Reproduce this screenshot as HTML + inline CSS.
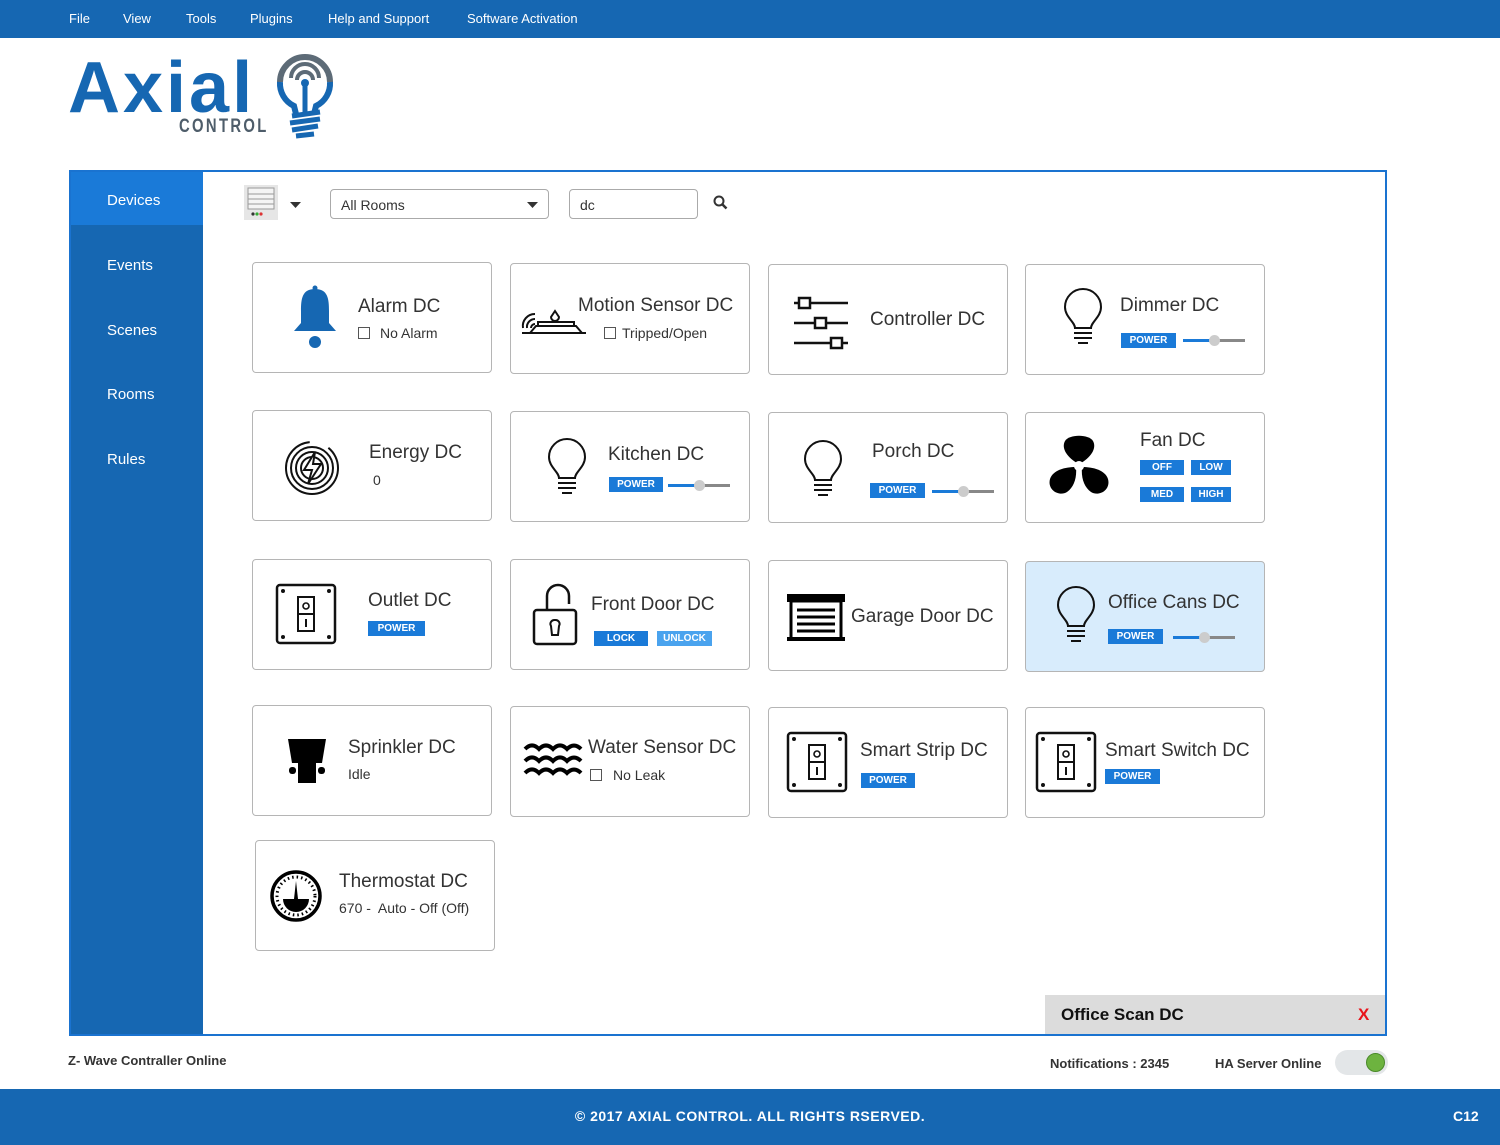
<!DOCTYPE html>
<html><head><meta charset="utf-8"><style>
*{margin:0;padding:0;box-sizing:border-box}
body{width:1500px;height:1145px;position:relative;background:#fff;font-family:"Liberation Sans",sans-serif;color:#333;overflow:hidden}
.a{position:absolute}
.top{left:0;top:0;width:1500px;height:38px;background:#1667b2}
.menu{color:#fff;font-size:13px;top:11px}
.side{left:69px;top:170px;width:134px;height:866px;background:#1667b2}
.panel{left:69px;top:170px;width:1318px;height:866px;border:2px solid #1a73d0}
.nav{color:#fff;font-size:15px;left:107px}
.card{border:1.5px solid #b5b5b5;border-radius:4px;width:240px;height:111px;background:#fff}
.t{font-size:19px;color:#333;line-height:22px;white-space:nowrap}
.s{font-size:14px;color:#333;line-height:18px;white-space:nowrap}
.cb{width:12px;height:12px;border:1px solid #555}
.btn{background:#1a7ad8;color:#fff;font-size:10px;font-weight:bold;text-align:center;line-height:15px;height:15px}
.sl{height:3px;background:#888}
.sl i{position:absolute;left:0;top:0;height:3px;background:#1a7ad8}
.sl b{position:absolute;top:-4px;width:11px;height:11px;border-radius:50%;background:#ccc}
svg{position:absolute}
</style></head><body>
<div class="a top"></div>
<div class="a menu" style="left:69px">File</div>
<div class="a menu" style="left:123px">View</div>
<div class="a menu" style="left:186px">Tools</div>
<div class="a menu" style="left:250px">Plugins</div>
<div class="a menu" style="left:328px">Help and Support</div>
<div class="a menu" style="left:467px">Software Activation</div>

<!-- logo -->
<div class="a" style="left:68px;top:48px;font-size:72px;font-weight:bold;color:#1667b2;letter-spacing:3px;line-height:80px">Axial</div>
<div class="a" style="left:179px;top:116px;font-size:19px;font-weight:bold;color:#4e5d6a;letter-spacing:3px;transform:scaleX(.78);transform-origin:left">CONTROL</div>
<svg style="left:272px;top:50px" width="66" height="92" viewBox="0 0 66 92">
<path d="M8 32 A25 25 0 0 1 58 32" fill="none" stroke="#5d6b77" stroke-width="6"/>
<path d="M8 32 A25 25 0 0 0 22 56 L24 64 M58 32 A25 25 0 0 1 44 56 L42 64" fill="none" stroke="#1667b2" stroke-width="6"/>
<path d="M19 28 A14 14 0 0 1 47 28 M25 30 A8 8 0 0 1 41 30" fill="none" stroke="#5d6b77" stroke-width="4"/>
<circle cx="33" cy="33" r="4" fill="#1667b2"/><path d="M33 33 V62" stroke="#1667b2" stroke-width="5"/>
<path d="M20 66 L48 62 M18 73 L48 69 M20 80 L46 76 M24 86 L42 84" stroke="#1667b2" stroke-width="5"/>
</svg>

<div class="a side"></div>
<div class="a" style="left:69px;top:172px;width:134px;height:53px;background:#1a7ad8"></div>
<div class="a panel"></div>
<div class="a nav" style="top:192px">Devices</div>
<div class="a nav" style="top:257px">Events</div>
<div class="a nav" style="top:322px">Scenes</div>
<div class="a nav" style="top:386px">Rooms</div>
<div class="a nav" style="top:451px">Rules</div>

<!-- toolbar -->
<div class="a" style="left:244px;top:185px;width:34px;height:35px;background:#e6e6e6"></div>
<svg style="left:244px;top:185px" width="34" height="35"><rect x="4" y="3" width="26" height="21" fill="#f4f4f4" stroke="#999"/><path d="M4 9H30M4 14H30M4 19H30" stroke="#999"/><circle cx="9" cy="29" r="1.6" fill="#333"/><circle cx="13" cy="29" r="1.6" fill="#3a3"/><circle cx="17" cy="29" r="1.6" fill="#d33"/></svg>
<svg style="left:290px;top:202px" width="11" height="6"><path d="M0 0H11L5.5 6Z" fill="#333"/></svg>
<div class="a" style="left:330px;top:189px;width:219px;height:30px;border:1px solid #aaa;border-radius:4px;font-size:14px;padding:7px 10px">All Rooms</div>
<svg style="left:527px;top:202px" width="11" height="6"><path d="M0 0H11L5.5 6Z" fill="#333"/></svg>
<div class="a" style="left:569px;top:189px;width:129px;height:30px;border:1px solid #aaa;border-radius:4px;font-size:14px;padding:7px 10px">dc</div>
<svg style="left:713px;top:195px" width="15" height="15"><circle cx="6" cy="6" r="4.5" fill="none" stroke="#333" stroke-width="2"/><path d="M9.5 9.5L13.5 13.5" stroke="#333" stroke-width="2.5"/></svg>

<!-- Row 1 -->
<div class="a card" style="left:252px;top:262px"></div>
<svg style="left:292px;top:285px" width="46" height="64"><circle cx="23" cy="3" r="2.5" fill="#1667b2"/><path d="M23 4 C10 4 9 14 9 26 L9 38 L2 46 H44 L37 38 L37 26 C37 14 36 4 23 4Z" fill="#1667b2"/><circle cx="23" cy="57" r="6" fill="#1667b2"/></svg>
<div class="a t" style="left:358px;top:296px">Alarm DC</div>
<div class="a cb" style="left:358px;top:327px"></div><div class="a s" style="left:380px;top:324px">No Alarm</div>

<div class="a card" style="left:510px;top:263px"></div>
<svg style="left:520px;top:303px" width="68" height="34"><path d="M2 30H66M10 30 L16 23 H56 L62 30 M18 23V19H54V23" fill="none" stroke="#111" stroke-width="2"/><path d="M35 8 L31 14 A4 4 0 0 0 39 14Z" fill="none" stroke="#111" stroke-width="2"/><path d="M3 25 A12 12 0 0 1 15 11 M7 25 A8 8 0 0 1 15 16 M11 25 A4 4 0 0 1 15 21" fill="none" stroke="#111" stroke-width="2"/></svg>
<div class="a t" style="left:578px;top:295px">Motion Sensor DC</div>
<div class="a cb" style="left:604px;top:327px"></div><div class="a s" style="left:622px;top:324px">Tripped/Open</div>

<div class="a card" style="left:768px;top:264px"></div>
<svg style="left:792px;top:296px" width="58" height="54"><g fill="none" stroke="#111" stroke-width="2.5"><path d="M2 7H56M2 27H56M2 47H56"/><rect x="7" y="2" width="11" height="10" fill="#fff"/><rect x="23" y="22" width="11" height="10" fill="#fff"/><rect x="39" y="42" width="11" height="10" fill="#fff"/></g></svg>
<div class="a t" style="left:870px;top:309px">Controller DC</div>

<div class="a card" style="left:1025px;top:264px"></div>
<svg style="left:1062px;top:288px" width="42" height="60"><path d="M13 40 C13 34 3 29 3 19 A18 18 0 0 1 39 19 C39 29 29 34 29 40 Z" fill="none" stroke="#111" stroke-width="2"/><path d="M12 45H30M12 50H30M16 55H26" stroke="#111" stroke-width="2"/></svg>
<div class="a t" style="left:1120px;top:295px">Dimmer DC</div>
<div class="a btn" style="left:1121px;top:333px;width:55px">POWER</div>
<div class="a sl" style="left:1183px;top:339px;width:62px"><i style="width:31px"></i><b style="left:26px"></b></div>

<!-- Row 2 -->
<div class="a card" style="left:252px;top:410px"></div>
<svg style="left:284px;top:440px" width="56" height="56"><g fill="none" stroke="#111" stroke-width="2"><circle cx="28" cy="28" r="26" stroke-dasharray="120 20"/><circle cx="28" cy="28" r="21"/><circle cx="28" cy="28" r="16"/><circle cx="28" cy="28" r="11"/></g><path d="M31 12 L20 30 H28 L24 44 L37 24 H29Z" fill="#fff" stroke="#111" stroke-width="2"/></svg>
<div class="a t" style="left:369px;top:442px">Energy DC</div>
<div class="a s" style="left:373px;top:471px">0</div>

<div class="a card" style="left:510px;top:411px"></div>
<svg style="left:546px;top:438px" width="42" height="60"><path d="M13 40 C13 34 3 29 3 19 A18 18 0 0 1 39 19 C39 29 29 34 29 40 Z" fill="none" stroke="#111" stroke-width="2"/><path d="M12 45H30M12 50H30M16 55H26" stroke="#111" stroke-width="2"/></svg>
<div class="a t" style="left:608px;top:444px">Kitchen DC</div>
<div class="a btn" style="left:609px;top:477px;width:54px">POWER</div>
<div class="a sl" style="left:668px;top:484px;width:62px"><i style="width:31px"></i><b style="left:26px"></b></div>

<div class="a card" style="left:768px;top:412px"></div>
<svg style="left:802px;top:440px" width="42" height="60"><path d="M13 40 C13 34 3 29 3 19 A18 18 0 0 1 39 19 C39 29 29 34 29 40 Z" fill="none" stroke="#111" stroke-width="2"/><path d="M12 45H30M12 50H30M16 55H26" stroke="#111" stroke-width="2"/></svg>
<div class="a t" style="left:872px;top:441px">Porch DC</div>
<div class="a btn" style="left:870px;top:483px;width:55px">POWER</div>
<div class="a sl" style="left:932px;top:490px;width:62px"><i style="width:31px"></i><b style="left:26px"></b></div>

<div class="a card" style="left:1025px;top:412px"></div>
<svg style="left:1047px;top:434px" width="64" height="62"><g fill="#000"><path d="M32 30 C20 24 14 14 18 7 C22 0 42 0 46 7 C50 14 44 24 32 30Z"/><path d="M29 33 C18 33 6 36 3 45 C0 56 12 63 20 58 C27 53 30 44 29 33Z"/><path d="M35 33 C46 33 58 36 61 45 C64 56 52 63 44 58 C37 53 34 44 35 33Z"/></g><circle cx="32" cy="32" r="5" fill="#fff"/></svg>
<div class="a t" style="left:1140px;top:430px">Fan DC</div>
<div class="a btn" style="left:1140px;top:460px;width:44px">OFF</div>
<div class="a btn" style="left:1191px;top:460px;width:40px">LOW</div>
<div class="a btn" style="left:1140px;top:487px;width:44px">MED</div>
<div class="a btn" style="left:1191px;top:487px;width:40px">HIGH</div>

<!-- Row 3 -->
<div class="a card" style="left:252px;top:559px"></div>
<svg style="left:275px;top:583px" width="62" height="62"><rect x="2" y="2" width="58" height="58" rx="3" fill="none" stroke="#111" stroke-width="2.5"/><g fill="#111"><circle cx="8" cy="8" r="2"/><circle cx="54" cy="8" r="2"/><circle cx="8" cy="54" r="2"/><circle cx="54" cy="54" r="2"/></g><rect x="23" y="14" width="16" height="34" fill="none" stroke="#111" stroke-width="2"/><path d="M23 31H39M31 36V44" stroke="#111" stroke-width="2"/><circle cx="31" cy="23" r="3" fill="none" stroke="#111" stroke-width="1.6"/></svg>
<div class="a t" style="left:368px;top:590px">Outlet DC</div>
<div class="a btn" style="left:368px;top:621px;width:57px">POWER</div>

<div class="a card" style="left:510px;top:559px"></div>
<svg style="left:530px;top:582px" width="50" height="64"><path d="M17 28 V14 A11 11 0 0 1 39 14 V22" fill="none" stroke="#111" stroke-width="2.5"/><rect x="4" y="28" width="42" height="34" rx="3" fill="none" stroke="#111" stroke-width="2.5"/><path d="M25 38 A4 4 0 0 1 29 44 L28 53 H22 L21 44 A4 4 0 0 1 25 38Z" fill="none" stroke="#111" stroke-width="2"/></svg>
<div class="a t" style="left:591px;top:594px">Front Door DC</div>
<div class="a btn" style="left:594px;top:631px;width:54px">LOCK</div>
<div class="a btn" style="left:657px;top:631px;width:55px;background:#4aa3ee">UNLOCK</div>

<div class="a card" style="left:768px;top:560px"></div>
<svg style="left:786px;top:593px" width="62" height="50"><rect x="1" y="1" width="58" height="8" fill="#000"/><rect x="5" y="8" width="50" height="38" fill="none" stroke="#000" stroke-width="3"/><path d="M11 17H49M11 24H49M11 31H49M11 38H49" stroke="#000" stroke-width="3"/><rect x="1" y="44" width="58" height="4" fill="#000"/></svg>
<div class="a t" style="left:851px;top:606px">Garage Door DC</div>

<div class="a card" style="left:1025px;top:561px;background:#d8ecfc"></div>
<svg style="left:1055px;top:586px" width="42" height="60"><path d="M13 40 C13 34 3 29 3 19 A18 18 0 0 1 39 19 C39 29 29 34 29 40 Z" fill="none" stroke="#111" stroke-width="2"/><path d="M12 45H30M12 50H30M16 55H26" stroke="#111" stroke-width="2"/></svg>
<div class="a t" style="left:1108px;top:592px">Office Cans DC</div>
<div class="a btn" style="left:1108px;top:629px;width:55px">POWER</div>
<div class="a sl" style="left:1173px;top:636px;width:62px"><i style="width:31px"></i><b style="left:26px"></b></div>

<!-- Row 4 -->
<div class="a card" style="left:252px;top:705px"></div>
<svg style="left:285px;top:737px" width="46" height="48"><path d="M3 2H41 L37 26 H7Z" fill="#000"/><rect x="13" y="24" width="18" height="22" fill="#000"/><rect x="4" y="30" width="7" height="7" rx="3" fill="#000"/><rect x="33" y="30" width="7" height="7" rx="3" fill="#000"/></svg>
<div class="a t" style="left:348px;top:737px">Sprinkler DC</div>
<div class="a s" style="left:348px;top:765px">Idle</div>

<div class="a card" style="left:510px;top:706px"></div>
<svg style="left:523px;top:741px" width="60" height="38"><g fill="none" stroke="#000" stroke-width="4"><path d="M2 8 Q9 1 16 8 Q23 1 30 8 Q37 1 44 8 Q51 1 58 8"/><path d="M2 20 Q9 13 16 20 Q23 13 30 20 Q37 13 44 20 Q51 13 58 20"/><path d="M2 32 Q9 25 16 32 Q23 25 30 32 Q37 25 44 32 Q51 25 58 32"/></g></svg>
<div class="a t" style="left:588px;top:737px">Water Sensor DC</div>
<div class="a cb" style="left:590px;top:769px"></div><div class="a s" style="left:613px;top:766px">No Leak</div>

<div class="a card" style="left:768px;top:707px"></div>
<svg style="left:786px;top:731px" width="62" height="62"><rect x="2" y="2" width="58" height="58" rx="3" fill="none" stroke="#111" stroke-width="2.5"/><g fill="#111"><circle cx="8" cy="8" r="2"/><circle cx="54" cy="8" r="2"/><circle cx="8" cy="54" r="2"/><circle cx="54" cy="54" r="2"/></g><rect x="23" y="14" width="16" height="34" fill="none" stroke="#111" stroke-width="2"/><path d="M23 31H39M31 36V44" stroke="#111" stroke-width="2"/><circle cx="31" cy="23" r="3" fill="none" stroke="#111" stroke-width="1.6"/></svg>
<div class="a t" style="left:860px;top:740px">Smart Strip DC</div>
<div class="a btn" style="left:861px;top:773px;width:54px">POWER</div>

<div class="a card" style="left:1025px;top:707px"></div>
<svg style="left:1035px;top:731px" width="62" height="62"><rect x="2" y="2" width="58" height="58" rx="3" fill="none" stroke="#111" stroke-width="2.5"/><g fill="#111"><circle cx="8" cy="8" r="2"/><circle cx="54" cy="8" r="2"/><circle cx="8" cy="54" r="2"/><circle cx="54" cy="54" r="2"/></g><rect x="23" y="14" width="16" height="34" fill="none" stroke="#111" stroke-width="2"/><path d="M23 31H39M31 36V44" stroke="#111" stroke-width="2"/><circle cx="31" cy="23" r="3" fill="none" stroke="#111" stroke-width="1.6"/></svg>
<div class="a t" style="left:1105px;top:740px">Smart Switch DC</div>
<div class="a btn" style="left:1105px;top:769px;width:55px">POWER</div>

<!-- Row 5 -->
<div class="a card" style="left:255px;top:840px"></div>
<svg style="left:269px;top:869px" width="54" height="54"><circle cx="27" cy="27" r="24" fill="none" stroke="#000" stroke-width="3.5"/><circle cx="27" cy="27" r="19" fill="none" stroke="#000" stroke-width="3" stroke-dasharray="1.5 3"/><path d="M14 30 A13 13 0 0 0 40 30Z" fill="#000"/><path d="M27 12 L25 30 H29Z" fill="#000"/></svg>
<div class="a t" style="left:339px;top:871px">Thermostat DC</div>
<div class="a s" style="left:339px;top:899px">670 -&nbsp; Auto - Off (Off)</div>

<!-- bottom bar -->
<div class="a" style="left:1045px;top:995px;width:340px;height:39px;background:#dcdcdc"></div>
<div class="a" style="left:1061px;top:1005px;font-size:17px;font-weight:bold;color:#111">Office Scan DC</div>
<div class="a" style="left:1358px;top:1005px;font-size:17px;font-weight:bold;color:#e8141b">X</div>

<div class="a" style="left:68px;top:1053px;font-size:13px;font-weight:bold;color:#333">Z- Wave Contraller Online</div>
<div class="a" style="left:1050px;top:1056px;font-size:13px;font-weight:bold;color:#333">Notifications : 2345</div>
<div class="a" style="left:1215px;top:1056px;font-size:13px;font-weight:bold;color:#333">HA Server Online</div>
<div class="a" style="left:1335px;top:1050px;width:53px;height:25px;border-radius:13px;background:#e3e6e8"></div>
<div class="a" style="left:1366px;top:1053px;width:19px;height:19px;border-radius:50%;background:#6db33f;border:1px solid #4a8a2a"></div>

<div class="a" style="left:0;top:1089px;width:1500px;height:56px;background:#1667b2"></div>
<div class="a" style="left:0;top:1108px;width:1500px;text-align:center;color:#fff;font-size:14px;font-weight:bold;letter-spacing:.5px">© 2017 AXIAL CONTROL. ALL RIGHTS RSERVED.</div>
<div class="a" style="left:1453px;top:1108px;color:#fff;font-size:14px;font-weight:bold">C12</div>
</body></html>
